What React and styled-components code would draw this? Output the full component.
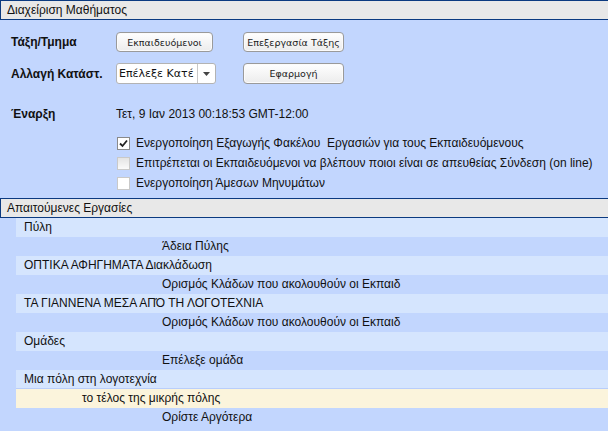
import React from 'react'
import styled, { createGlobalStyle } from 'styled-components'

const GlobalStyle = createGlobalStyle`
  html, body {
    margin: 0;
    padding: 0;
    background: #c2d6fe;
  }
  body {
    font-family: 'Liberation Sans', Arial, sans-serif;
    font-size: 12px;
    color: #111;
  }
`

const Page = styled.div`
  width: 608px;
  height: 431px;
  overflow: hidden;
  background: #c2d6fe;
`

const SectionHeader = styled.div`
  height: 18px;
  line-height: 18px;
  border: 1px solid #0b3a80;
  border-right: none;
  background: #e8e8e8;
  padding-left: 6px;
  font-size: 12px;
  color: #111;
  white-space: nowrap;
`

const FormPanel = styled.div`
  padding: 12px 0 5px 11px;
`

const FormRow = styled.div`
  display: grid;
  grid-template-columns: 105px 127px auto;
  align-items: center;
  height: ${p => p.$h || 20}px;
  margin-bottom: ${p => p.$gap || 0}px;
`

const Label = styled.div`
  font-weight: bold;
  font-size: 12px;
`

const Button = styled.button`
  width: ${p => p.$w || 97}px;
  height: ${p => p.$h || 20}px;
  padding: 0;
  border: 1px solid #9a9a9a;
  border-radius: 4px;
  box-shadow: inset 0 0 0 1px #fbfbfb;
  background: linear-gradient(#ffffff, #ececec);
  font-family: 'DejaVu Sans', Verdana, sans-serif;
  font-size: 9.5px;
  color: #222;
  white-space: nowrap;
  overflow: hidden;
`

const Select = styled.div`
  display: flex;
  width: 98px;
  height: 19px;
  border: 1px solid #b3b3b3;
  border-radius: 3px;
  background: #fff;
  overflow: hidden;
`

const SelectText = styled.div`
  flex: 1;
  padding-left: 2px;
  font-family: 'DejaVu Sans', Verdana, sans-serif;
  font-size: 11px;
  line-height: 19px;
  white-space: nowrap;
  overflow: hidden;
`

const SelectArrow = styled.div`
  width: 17px;
  border-left: 1px solid #c8c8c8;
  display: flex;
  align-items: center;
  justify-content: center;
`

const DateText = styled.div`
  grid-column: 2 / 4;
  font-size: 12px;
  white-space: nowrap;
`

const CheckRow = styled.div`
  display: flex;
  align-items: center;
  height: 20px;
  padding-left: 106px;
  gap: 6px;
  white-space: nowrap;
`

const Box = styled.span`
  width: 11px;
  height: 11px;
  border: 1px solid ${p => (p.$checked ? '#8a8a8a' : '#c9c9c9')};
  background: ${p => (p.$shade ? 'linear-gradient(#e4e4e4, #fafafa)' : '#fff')};
  display: inline-flex;
  align-items: center;
  justify-content: center;
`

const TaskList = styled.div`
  display: flex;
  flex-direction: column;
`

const TaskRow = styled.div`
  height: 19px;
  line-height: 19px;
  margin-left: 16px;
  padding-left: ${p => p.$indent}px;
  background: ${p => p.$bg};
  font-size: 12px;
  white-space: nowrap;
  box-sizing: border-box;
  border-bottom: ${p => (p.$line ? '1px solid #b9cefb' : 'none')};
`

const Check = ({ checked, shade }) => (
  <Box $checked={checked} $shade={shade}>
    {checked && (
      <svg width="9" height="9" viewBox="0 0 9 9">
        <path d="M1 4.5 L3.5 7 L8 1.5" fill="none" stroke="#222" strokeWidth="1.8" />
      </svg>
    )}
  </Box>
)

const tasks = [
  { text: 'Πύλη', kind: 'group' },
  { text: 'Άδεια Πύλης', kind: 'item' },
  { text: 'ΟΠΤΙΚΑ ΑΦΗΓΗΜΑΤΑ Διακλάδωση', kind: 'group' },
  { text: 'Ορισμός Κλάδων που ακολουθούν οι Εκπαιδ', kind: 'item' },
  { text: 'ΤΑ ΓΙΑΝΝΕΝΑ ΜΕΣΑ ΑΠΌ ΤΗ ΛΟΓΟΤΕΧΝΙΑ', kind: 'group' },
  { text: 'Ορισμός Κλάδων που ακολουθούν οι Εκπαιδ', kind: 'item' },
  { text: 'Ομάδες', kind: 'group' },
  { text: 'Επέλεξε ομάδα', kind: 'item' },
  { text: 'Μια πόλη στη λογοτεχνία', kind: 'group', line: true },
  { text: 'το τέλος της μικρής πόλης', kind: 'current' },
  { text: 'Ορίστε Αργότερα', kind: 'item' },
]

const rowStyle = {
  group: { bg: '#d5e5fe', indent: 8 },
  item: { bg: '#c2d6fe', indent: 146 },
  current: { bg: '#fbf4dc', indent: 66 },
}

const App = () => (
  <Page>
    <GlobalStyle />
    <SectionHeader>Διαχείριση Μαθήματος</SectionHeader>
    <FormPanel>
      <FormRow $gap={11}>
        <Label>Τάξη/Τμημα</Label>
        <Button $w={97}>Εκπαιδευόμενοι</Button>
        <Button $w={101}>Επεξεργασία Τάξης</Button>
      </FormRow>
      <FormRow $h={21} $gap={20}>
        <Label>Αλλαγή Κατάστ.</Label>
        <Select>
          <SelectText>Επέλεξε Κατέ</SelectText>
          <SelectArrow>
            <svg width="7" height="4" viewBox="0 0 7 4">
              <path d="M0 0 H7 L3.5 4 Z" fill="#444" />
            </svg>
          </SelectArrow>
        </Select>
        <Button $w={101} $h={21}>Εφαρμογή</Button>
      </FormRow>
      <FormRow $gap={9}>
        <Label>Έναρξη</Label>
        <DateText>Τετ, 9 Ιαν 2013 00:18:53 GMT-12:00</DateText>
      </FormRow>
      <CheckRow>
        <Check checked />
        Ενεργοποίηση Εξαγωγής Φακέλου&nbsp; Εργασιών για τους Εκπαιδευόμενους
      </CheckRow>
      <CheckRow>
        <Check shade />
        Επιτρέπεται οι Εκπαιδευόμενοι να βλέπουν ποιοι είναι σε απευθείας Σύνδεση (on line)
      </CheckRow>
      <CheckRow>
        <Check />
        Ενεργοποίηση Άμεσων Μηνυμάτων
      </CheckRow>
    </FormPanel>
    <SectionHeader>Απαιτούμενες Εργασίες</SectionHeader>
    <TaskList>
      {tasks.map((t, i) => (
        <TaskRow
          key={i}
          $bg={rowStyle[t.kind].bg}
          $indent={rowStyle[t.kind].indent}
          $line={t.line}
        >
          {t.text}
        </TaskRow>
      ))}
    </TaskList>
  </Page>
)

export default App
